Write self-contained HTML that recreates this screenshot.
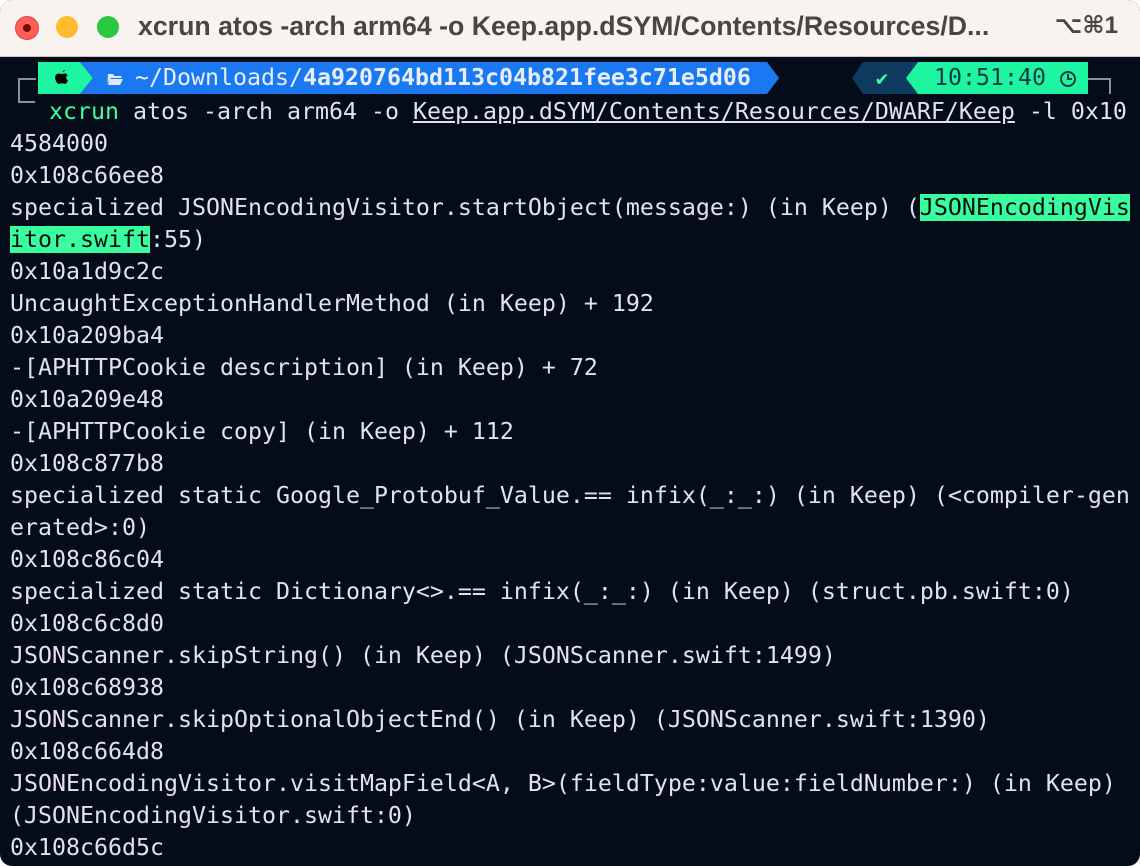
<!DOCTYPE html>
<html><head><meta charset="utf-8"><style>
html,body{margin:0;padding:0;background:#fff;}
#win{position:absolute;left:0;top:0;width:1140px;height:866px;border-radius:12px;overflow:hidden;background:#050c19;}
#title{position:absolute;left:0;top:0;width:1140px;height:56px;background:#f8f3ee;border-bottom:1px solid #c9c5c2;}
.dot{position:absolute;top:16px;width:22px;height:22px;border-radius:50%;}
#tt{position:absolute;left:138px;top:11px;font:bold 26.7px "Liberation Sans",sans-serif;color:#474545;white-space:pre;}
#sc{position:absolute;right:22px;top:11px;font:bold 24px "Liberation Sans","DejaVu Sans",sans-serif;color:#474545;}
.term{position:absolute;left:10px;top:96px;font-family:"DejaVu Sans Mono","Liberation Mono",monospace;font-size:23.25px;line-height:32px;color:#e4e0ec;white-space:pre;}
.hl{background:#3afda0;color:#051010;}
.pl{position:absolute;top:62px;height:32px;font-family:"DejaVu Sans Mono",monospace;font-size:23.25px;line-height:32px;white-space:pre;}
</style></head><body>
<div id="win">
<div id="title">
<div class="dot" style="left:15px;background:#fe5f57;border:0.5px solid #e0443e"><div style="position:absolute;left:7px;top:7px;width:8px;height:8px;border-radius:50%;background:#7a0c0a"></div></div>
<div class="dot" style="left:56px;background:#febc2e"></div>
<div class="dot" style="left:97px;background:#28c840"></div>
<div id="tt">xcrun atos -arch arm64 -o Keep.app.dSYM/Contents/Resources/D...</div>
<div id="sc">⌥⌘1</div>
</div>
<svg style="position:absolute;left:0;top:56px" width="1140" height="60">
<path d="M36 23 H19 V46 H35" stroke="#8a8f99" stroke-width="2" fill="none"/>
<path d="M1088 23 H1110 V38" stroke="#8a8f99" stroke-width="2" fill="none"/>
<polygon points="38,6 80,6 93,22 80,38 38,38" fill="#1ef5a0"/>
<polygon points="80,6 767,6 779,22 767,38 80,38 93,22" fill="#1a78f3"/>
<polygon points="863,6 920,6 920,38 863,38 852,22" fill="#0e3a60"/>
<polygon points="918,6 1088,6 1088,38 918,38 906,22" fill="#1ef5a0"/>
<path d="M65 14c-1 0-2 1-2.5 2 1 0 2-1 2.5-2zM62 18c-2 0-3.5-1-5 0-2 1-2.5 4-1 7 1 2 2 3 3 3s1.5-.7 3-.7 2 .7 3 .7 2-1.5 3-3.5c-2-1-2.5-4-.3-5.5-1-1.3-2.5-1.5-3.2-1.5-1.2 0-2 .5-2.5.5z" fill="#000"/>
<path d="M108 18h5l1.5 2h7v2h-11l-3 6z M110 23h13l-3 6h-12z" fill="#dfe8f5"/>
<circle cx="1068" cy="23" r="7" stroke="#0e3a4a" stroke-width="2" fill="none"/>
<path d="M1068 18v5h4" stroke="#0e3a4a" stroke-width="2" fill="none"/>
</svg>
<div class="pl" style="left:135px;color:#e8eef8">~/Downloads/<b>4a920764bd113c04b821fee3c71e5d06</b></div>
<div class="pl" style="left:876px;color:#3dfea0;font-size:20px">✔</div>
<div class="pl" style="left:934px;color:#0e3a4a">10:51:40</div>
<div class="term"><span style="margin-left:39px;color:#3dfea0">xcrun</span> atos -arch arm64 -o <u>Keep.app.dSYM/Contents/Resources/DWARF/Keep</u> -l 0x10
4584000
0x108c66ee8
specialized JSONEncodingVisitor.startObject(message:) (in Keep) (<span class="hl">JSONEncodingVis</span>
<span class="hl">itor.swift</span>:55)
0x10a1d9c2c
UncaughtExceptionHandlerMethod (in Keep) + 192
0x10a209ba4
-[APHTTPCookie description] (in Keep) + 72
0x10a209e48
-[APHTTPCookie copy] (in Keep) + 112
0x108c877b8
specialized static Google_Protobuf_Value.== infix(_:_:) (in Keep) (&lt;compiler-gen
erated&gt;:0)
0x108c86c04
specialized static Dictionary&lt;&gt;.== infix(_:_:) (in Keep) (struct.pb.swift:0)
0x108c6c8d0
JSONScanner.skipString() (in Keep) (JSONScanner.swift:1499)
0x108c68938
JSONScanner.skipOptionalObjectEnd() (in Keep) (JSONScanner.swift:1390)
0x108c664d8
JSONEncodingVisitor.visitMapField&lt;A, B&gt;(fieldType:value:fieldNumber:) (in Keep)
(JSONEncodingVisitor.swift:0)
0x108c66d5c</div>
</div>
</body></html>
